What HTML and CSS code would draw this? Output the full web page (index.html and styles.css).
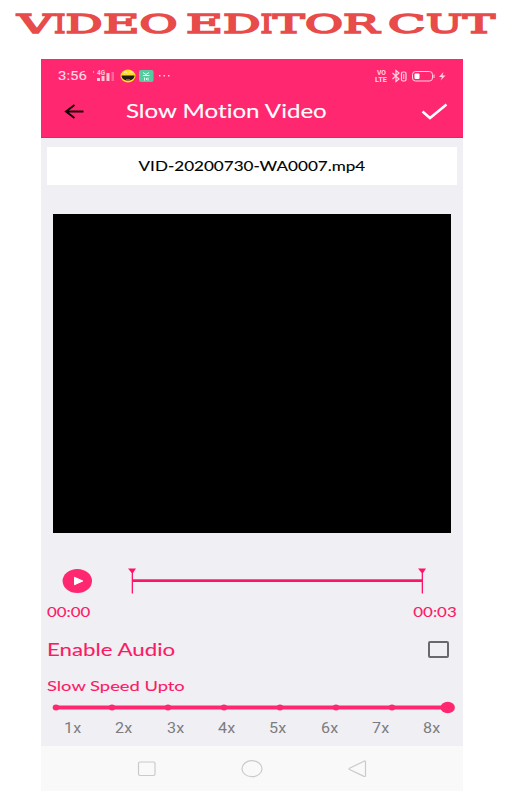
FILE: index.html
```html
<!DOCTYPE html>
<html lang="en">
<head>
    <meta charset="UTF-8">
    <meta name="viewport" content="width=device-width, initial-scale=1.0">
    <title>Video Editor Cut</title>
    <link rel="stylesheet" href="styles.css">
</head>
<body>
    <h1 class="banner">
        <!-- every letter is stretched to its own width -->
        <svg width="512" height="59" viewBox="0 0 512 59">
            <text y="33.2"><tspan x="17.500" textLength="36" lengthAdjust="spacingAndGlyphs">V</tspan><tspan x="54" textLength="11.5" lengthAdjust="spacingAndGlyphs">I</tspan><tspan x="65.5" textLength="37" lengthAdjust="spacingAndGlyphs">D</tspan><tspan x="103" textLength="36.5" lengthAdjust="spacingAndGlyphs">E</tspan><tspan x="139.5" textLength="38" lengthAdjust="spacingAndGlyphs">O</tspan></text>
            <text y="33.2"><tspan x="186" textLength="37" lengthAdjust="spacingAndGlyphs">E</tspan><tspan x="223" textLength="37.5" lengthAdjust="spacingAndGlyphs">D</tspan><tspan x="260.5" textLength="12" lengthAdjust="spacingAndGlyphs">I</tspan><tspan x="273" textLength="31.5" lengthAdjust="spacingAndGlyphs">T</tspan><tspan x="305" textLength="38" lengthAdjust="spacingAndGlyphs">O</tspan><tspan x="343" textLength="36" lengthAdjust="spacingAndGlyphs">R</tspan></text>
            <text y="33.2"><tspan x="388" textLength="37.5" lengthAdjust="spacingAndGlyphs">C</tspan><tspan x="426" textLength="36.5" lengthAdjust="spacingAndGlyphs">U</tspan><tspan x="463" textLength="32" lengthAdjust="spacingAndGlyphs">T</tspan></text>
        </svg>
    </h1>

    <div class="phone">
        <header class="header">
            <!-- Status bar -->
            <div class="status">
                <span class="wide clock">3:56</span>
                <svg class="status-left" width="84" height="16" viewBox="0 0 84 16">
                    <g fill="#ffc4d6">
                        <rect x="2" y="3" width="1" height="2" opacity=".6"/>
                        <text x="6" y="6.5" class="tiny" textLength="8" lengthAdjust="spacingAndGlyphs">4G</text>
                        <rect x="6" y="10" width="3" height="3"/>
                        <rect x="10.500" y="8" width="3" height="5"/>
                        <rect x="15.500" y="5" width="3" height="8"/>
                        <rect x="20.500" y="4" width="2.500" height="9" opacity=".4"/>
                    </g>
                    <ellipse cx="37" cy="8" rx="7.500" ry="6.500" fill="#ffdc28"/>
                    <path d="M30.500 7.500h13c0 3-3 5-6.500 5s-6.500-2-6.500-5z" fill="#221c16"/>
                    <path d="M33 4.500q1.500-1.500 3 0M38.500 4.500q1.500-1.500 3 0" fill="none" stroke="#fff6c8"/>
                    <path d="M35 11.500h4" stroke="#b6483c"/>
                    <rect x="48" y="2" width="14.500" height="12" rx="2" fill="#55cca0"/>
                    <path d="M52 4.500l3 2 3-2M52 7.500h6.500M53.500 9.500v3M57 9.500v3M55.500 10v2" stroke="#e0fff2" fill="none"/>
                    <g fill="#ffd0df">
                        <rect x="68" y="7" width="1.500" height="1.500"/>
                        <rect x="72.500" y="7" width="1.500" height="1.500"/>
                        <rect x="77" y="7" width="1.500" height="1.500"/>
                    </g>
                </svg>
                <svg class="status-right" width="74" height="16" viewBox="0 0 74 16">
                    <g fill="#ffd3e1">
                        <text x="3" y="7" class="tiny" textLength="9" lengthAdjust="spacingAndGlyphs">VO</text>
                        <text x="1" y="13.500" class="tiny" textLength="12" lengthAdjust="spacingAndGlyphs">LTE</text>
                    </g>
                    <g fill="none" stroke="#ffd3e1">
                        <path d="M18.500 5l6.500 6-3 2.500v-11l3 2.500-6.500 6" stroke-width="1.200"/>
                        <rect x="27.500" y="4" width="4.500" height="9" rx="1.500" stroke-width="1.200"/>
                        <path d="M29.750 6v5"/>
                        <rect x="38.500" y="3.500" width="20" height="9.500" rx="3"/>
                    </g>
                    <rect x="40.500" y="5.500" width="5" height="5.500" rx="1" fill="#fff"/>
                    <path d="M60 6.500v3.500" stroke="#ffd3e1"/>
                    <path d="M69.500 4l-4.500 5h3l-1.500 3.500 5-5h-3z" fill="#ffd3e1"/>
                </svg>
            </div>
            <!-- Title bar -->
            <div class="toolbar">
                <svg width="20" height="16" viewBox="0 0 20 16">
                    <path d="M19.500 8.500H2M10.500 2L2 8.500l8.500 6.500" fill="none" stroke="#1a000a" stroke-width="2"/>
                </svg>
                <span class="wide screen-title">Slow Motion Video</span>
                <svg class="done" width="28" height="18" viewBox="0 0 28 18">
                    <path d="M2.500 9.500l7.500 6.500L26.500 2.500" fill="none" stroke="#fff" stroke-width="2.500"/>
                </svg>
            </div>
        </header>

        <main class="content">
            <div class="file-name"><span class="wide">VID-20200730-WA0007.mp4</span></div>
            <div class="video"></div>

            <div class="player">
                <svg width="30" height="26" viewBox="0 0 30 26">
                    <ellipse cx="15.300" cy="13" rx="14.700" ry="12" fill="#ff2870"/>
                    <path d="M12.500 9.300l8.300 3.700-8.300 3.700z" fill="#fff" stroke="#fff" stroke-linejoin="round"/>
                </svg>
                <svg class="range" width="300" height="28" viewBox="0 0 300 28">
                    <rect x="5" y="12.300" width="290" height="2.700" fill="#fb1565"/>
                    <path d="M1 1.500h8L6 6v20.500H4.700V6zM291 1.500h8L296 6v20.500h-1.300V6z" fill="#fb1565"/>
                </svg>
            </div>

            <div class="times">
                <span class="wide">00:00</span>
                <span class="wide end">00:03</span>
            </div>

            <div class="audio">
                <span class="wide">Enable Audio</span>
                <span class="checkbox"></span>
            </div>

            <div class="speed-title"><span class="wide">Slow Speed Upto</span></div>
            <svg class="slider" width="422" height="14" viewBox="0 0 422 14">
                <rect x="15" y="5.500" width="392" height="4" fill="#ff2870"/>
                <g fill="#ff2870">
                    <ellipse cx="15" cy="7.500" rx="3.300" ry="3"/>
                    <ellipse cx="71" cy="7.500" rx="3.300" ry="3"/>
                    <ellipse cx="127" cy="7.500" rx="3.300" ry="3"/>
                    <ellipse cx="183" cy="7.500" rx="3.300" ry="3"/>
                    <ellipse cx="239" cy="7.500" rx="3.300" ry="3"/>
                    <ellipse cx="295" cy="7.500" rx="3.300" ry="3"/>
                    <ellipse cx="351" cy="7.500" rx="3.300" ry="3"/>
                    <ellipse cx="406.700" cy="7.500" rx="7.200" ry="5.700"/>
                </g>
            </svg>
            <div class="speeds">
                <span>1x</span><span>2x</span><span>3x</span><span>4x</span>
                <span>5x</span><span>6x</span><span>7x</span><span>8x</span>
            </div>
        </main>

        <!-- Navigation buttons -->
        <nav class="nav">
            <svg width="22" height="18" viewBox="0 0 22 18">
                <rect x="2.500" y="2" width="16.500" height="13.500" rx="1.500"/>
            </svg>
            <svg width="22" height="18" viewBox="0 0 22 18">
                <ellipse cx="11" cy="8.700" rx="10" ry="8"/>
            </svg>
            <svg width="22" height="18" viewBox="0 0 22 18">
                <path d="M18.500 1.800v14q0 1-1.500.6L2.500 9.500q-1-.6 0-1.200L17 1.200q1.500-.4 1.500.6z"/>
            </svg>
        </nav>
    </div>
</body>
</html>
```
FILE: styles.css
```css
body {
    margin: 0;
    background-color: #fff;
    font-family: Lato, "Liberation Sans", sans-serif;
    font-variant-ligatures: none;
    color: #fb1a66;
}

svg {
    display: block;
    flex: none;
}

.banner {
    margin: 0;
    height: 59px;
}

.banner text {
    font: 26.5px "DejaVu Serif", serif;
    fill: #e84c4a;
    stroke: #e84c4a;
    stroke-width: 1.6px;
}

.phone {
    width: 422px;
    height: 732px;
    margin-left: 41px;
    display: flex;
    flex-direction: column;
    background-color: #efeff4;
}

/* the lettering is wider than the font's own shapes */
.wide {
    display: inline-block;
    white-space: nowrap;
    transform: scaleX(1.25);
    transform-origin: left center;
    -webkit-text-stroke: 0.1px currentColor;
}

.header {
    height: 79px;
    box-sizing: border-box;
    border-bottom: 1px solid #f51c62;
    background-color: #ff2870;
}

.status {
    display: flex;
    align-items: center;
    height: 33px;
    padding: 0 15px 0 17px;
}

.status .clock {
    width: 33px;
    font: 12.5px Roboto, sans-serif;
    color: #ffd9e5;
    transform: scaleX(1.2);
}

.status-right {
    margin-left: auto;
}

.tiny {
    font: bold 6.5px Roboto, sans-serif;
}

.toolbar {
    display: flex;
    align-items: center;
    height: 37px;
    padding: 0 15px 0 23px;
}

.toolbar .screen-title {
    margin-left: 41.5px;
    font-size: 19.5px;
    color: #fff;
    transform: scaleX(1.235);
}

.done {
    margin-left: auto;
}

.content {
    height: 687px;
    flex: 1;
}

.file-name {
    display: flex;
    justify-content: center;
    align-items: center;
    height: 38px;
    margin: 9px 6px 0;
    padding-bottom: 2px;
    box-sizing: border-box;
    background-color: #fff;
    color: #000;
    font-size: 14px;
}

.file-name .wide {
    transform: scaleX(1.22);
    transform-origin: center;
}

.video {
    height: 319px;
    margin: 29px 12px 0;
    background-color: #000;
}

.player {
    display: flex;
    align-items: center;
    height: 28px;
    margin-top: 34px;
    padding-left: 21px;
}

.range {
    margin-left: 35px;
}

.times {
    display: flex;
    justify-content: space-between;
    height: 20px;
    margin: 7px 6px 0;
    line-height: 20px;
    font-size: 13.5px;
}

.times .end {
    transform-origin: right center;
}

.audio {
    display: flex;
    justify-content: space-between;
    align-items: center;
    height: 24px;
    margin-top: 15px;
    padding: 0 14px 0 6px;
    font-size: 17px;
}

.audio .wide,
.speed-title .wide {
    transform: scaleX(1.31);
}

.checkbox {
    width: 17px;
    height: 13px;
    border: 2px solid #69696c;
    border-radius: 2px;
}

.speed-title {
    height: 20px;
    margin: 15px 0 0 6px;
    line-height: 20px;
    font-size: 14px;
}

.slider {
    margin-top: 4px;
}

.speeds {
    display: grid;
    grid-template-columns: repeat(8, 1fr);
    margin: 5px 5.500px 0 6px;
    text-align: center;
    line-height: 18px;
    font-family: Roboto, sans-serif;
    font-size: 14px;
    color: #7c7c80;
}

.speeds span {
    transform: scaleX(1.15);
}

.nav {
    display: flex;
    justify-content: center;
    align-items: center;
    gap: 83.5px;
    height: 45px;
    background-color: #f9f9f9;
}

.nav svg {
    fill: none;
    stroke: #cacaca;
    stroke-width: 1.2;
}
```
